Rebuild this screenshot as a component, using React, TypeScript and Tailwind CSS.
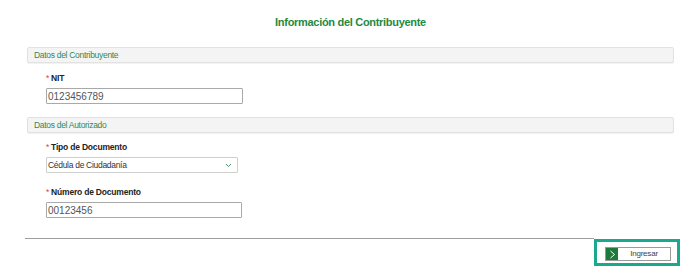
export default function App() {
	return (
		<div className="w-[688px] h-[280px] bg-white pt-[15px] font-['Liberation_Sans',Arial,sans-serif] overflow-hidden">
			<h1 className="ml-[27px] mr-[14px] text-center text-[11px] leading-[14px] font-bold tracking-[-0.3px] text-[#1d8a3f]">
				Información del Contribuyente
			</h1>

			<div className="ml-[27px] mr-[14px] mt-[18px] h-[16px] bg-[#f4f4f4] border border-[#e2e2e2] rounded-[2px] flex items-center pl-[6px] shadow-[0_1px_1px_rgba(0,0,0,0.06)]">
				<span className="text-[8.5px] tracking-[-0.3px] text-[#2f8a55]">Datos del Contribuyente</span>
			</div>

			<div className="ml-[46px] mt-[10px]">
				<label className="flex items-center h-[10px] text-[8.5px] font-bold tracking-[-0.2px] text-[#222]">
					<span className="text-[#e0413a] mr-[2px] font-normal">*</span>NIT
				</label>
				<div className="mt-[5px] w-[197px] h-[16px] border border-[#a9a9a9] rounded-[1px] flex items-center px-[1px]">
					<span className="text-[10px] text-[#555]">0123456789</span>
				</div>
			</div>

			<div className="ml-[27px] mr-[14px] mt-[13px] h-[16px] bg-[#f4f4f4] border border-[#e2e2e2] rounded-[2px] flex items-center pl-[6px] shadow-[0_1px_1px_rgba(0,0,0,0.06)]">
				<span className="text-[8.5px] tracking-[-0.3px] text-[#2f8a55]">Datos del Autorizado</span>
			</div>

			<div className="ml-[46px] mt-[9px]">
				<label className="flex items-center h-[10px] text-[8.5px] font-bold tracking-[-0.2px] text-[#222]">
					<span className="text-[#e0413a] mr-[2px] font-normal">*</span>Tipo de Documento
				</label>
				<div className="mt-[5px] w-[192px] h-[16px] border border-[#cfcfcf] rounded-[1px] flex items-center justify-between pl-[1px] pr-[5px]">
					<span className="text-[8.5px] tracking-[-0.3px] text-[#333]">Cédula de Ciudadanía</span>
					<svg width="7" height="5" viewBox="0 0 7 5" fill="none">
						<path d="M1 1 L3.5 3.5 L6 1" stroke="#4c9a6c" strokeWidth="1" />
					</svg>
				</div>

				<label className="mt-[14px] flex items-center h-[10px] text-[8.5px] font-bold tracking-[-0.2px] text-[#222]">
					<span className="text-[#e0413a] mr-[2px] font-normal">*</span>Número de Documento
				</label>
				<div className="mt-[5px] w-[196px] h-[16px] border border-[#a9a9a9] rounded-[1px] flex items-center px-[1px]">
					<span className="text-[10px] text-[#555]">00123456</span>
				</div>
			</div>

			<div className="mt-[20px] ml-[25px] mr-[8px] flex items-start">
				<div className="flex-1 border-t border-[#9e9e9e]" />
				<div className="mt-[1px] w-[86px] h-[27px] border-[3px] border-[#1aa88e] pt-[5px] pl-[8px]">
					<button className="w-[66px] h-[14px] border border-[#9a9a9a] bg-white flex items-stretch">
						<span className="w-[12px] bg-[#1e7a3c] flex items-center justify-center">
							<svg width="7" height="9" viewBox="0 0 7 9" fill="none">
								<path d="M1.5 1 L5.5 4.5 L1.5 8" stroke="#ffffff" strokeWidth="1" />
							</svg>
						</span>
						<span className="flex-1 flex items-center justify-center text-[8px] tracking-[-0.2px] text-[#444]">Ingresar</span>
					</button>
				</div>
			</div>
		</div>
	)
}
